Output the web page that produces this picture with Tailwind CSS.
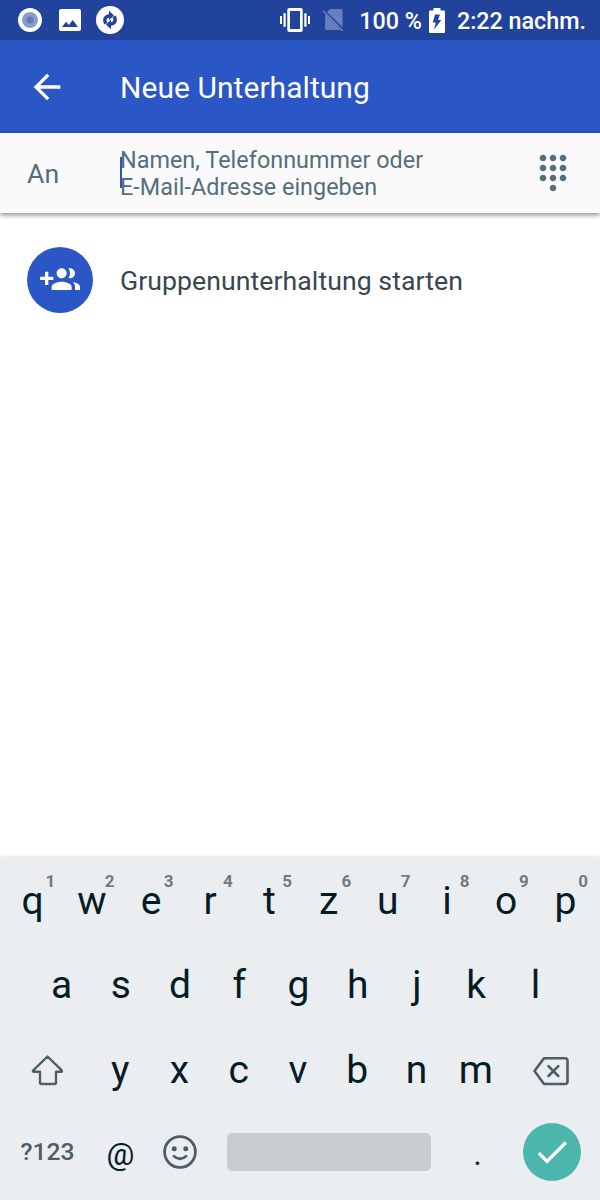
<!DOCTYPE html>
<html lang="de">
<head>
    <meta charset="UTF-8" />
    <meta name="viewport" content="width=device-width, initial-scale=1.0">
    <title>Neue Unterhaltung</title>
    <script src="https://cdn.jsdelivr.net/npm/@tailwindcss/browser@4"></script>
</head>
<body class="bg-white overflow-hidden">
    <div class="w-[600px] h-[1200px] flex flex-col font-[Roboto,sans-serif]">
        <!-- Status bar -->
        <div class="h-10 shrink-0 bg-[#21439c] text-white flex items-center pl-[18px] pr-[14px]">
            <svg class="w-6 h-6" viewBox="0 0 24 24">
                <circle cx="12" cy="12" r="12" fill="#fff" />
                <circle cx="12" cy="12" r="8" fill="#8b9ccc" />
                <circle cx="12" cy="12" r="3.6" fill="#5f78b9" />
            </svg>
            <svg class="w-[22px] h-[22px] ml-[17px]" viewBox="0 0 22 22">
                <path fill="#fff" fill-rule="evenodd" d="M2 0h18a2 2 0 0 1 2 2v18a2 2 0 0 1-2 2H2a2 2 0 0 1-2-2V2a2 2 0 0 1 2-2zM3 18h16l-5.200-7-4 5-2.700-3.300z" />
            </svg>
            <svg class="w-7 h-7 ml-[15px]" viewBox="0 0 28 28">
                <circle cx="14" cy="14" r="14" fill="#fff" />
                <g fill="none" stroke="#21439c" stroke-width="3.400">
                    <path d="M9.800 17.800Q6.600 11 14 9.600" />
                    <path d="M18.200 10.200Q21.400 17 14 18.400" />
                    <path fill="#21439c" stroke="none" d="M13 4.800l5 4.800-5 4.600zM15 23.200l-5-4.800 5-4.600z" />
                </g>
            </svg>
            <svg class="w-[30px] h-[24px] ml-auto" viewBox="0 0 30 24" fill="#fff">
                <path fill-rule="evenodd" d="M9.300 0h11.400a2 2 0 0 1 2 2v20a2 2 0 0 1-2 2H9.300a2 2 0 0 1-2-2V2a2 2 0 0 1 2-2zM10 3v18h10V3z" />
                <path d="M0 8h2v8H0zM3.500 5.300h2.200v13.400H3.500zM28 8h2v8h-2zM24.300 5.300h2.200v13.400h-2.200z" />
            </svg>
            <svg class="w-[22px] h-6 ml-3" viewBox="0 0 22 24">
                <path fill="#6a80bc" d="M8 1h11a1.600 1.600 0 0 1 1.600 1.600v16.600L5 3.900zM3.300 5.900L18.800 22H5a2 2 0 0 1-2-2z" />
                <path stroke="#6a80bc" stroke-width="1.600" d="M1 2.800L21 23" />
            </svg>
            <span class="ml-[15px] text-[23.3px] font-medium whitespace-nowrap leading-10 pt-[2px]">100 %</span>
            <svg class="w-4 h-[25px] ml-[7px]" viewBox="0 0 16 25">
                <path fill="#fff" d="M4.500 0h7v2.500H15a1 1 0 0 1 1 1V24a1 1 0 0 1-1 1H1a1 1 0 0 1-1-1V3.500a1 1 0 0 1 1-1h3.500z" />
                <path fill="#21439c" d="M6 6.500h5L9 12h3.300L5 21.500l1.800-7H3.800z" />
            </svg>
            <span class="ml-[12px] text-[23.3px] font-medium whitespace-nowrap leading-10 pt-[2px]">2:22 nachm.</span>
        </div>

        <!-- App bar -->
        <header class="h-[93px] shrink-0 bg-[#2a56c6] text-white flex items-center pl-[27px]">
            <svg class="w-10 h-10" viewBox="0 0 24 24" fill="#fff">
                <path d="M20 11H7.830l5.590-5.590L12 4l-8 8 8 8 1.410-1.410L7.830 13H20v-2z" />
            </svg>
            <h1 class="ml-[53px] text-[30px] tracking-[0.05px] whitespace-nowrap pt-[2px]">Neue Unterhaltung</h1>
        </header>

        <!-- Recipient -->
        <div class="relative h-20 shrink-0 bg-[#fafafa] text-[#546e7a] flex items-center pl-[27px] pr-[27px] shadow-[0_2px_5px_rgba(0,0,0,0.45)]">
            <span class="w-[93px] text-[26.67px] pt-[2px]">An</span>
            <div class="relative text-[23.33px] leading-[27.3px] tracking-[0.05px] whitespace-nowrap pt-[2px]">
                <span class="absolute left-0 top-[12px] w-[2px] h-[31px] bg-[#2a56c6]"></span>
                <p class="relative">Namen, Telefonnummer oder<br>E-Mail-Adresse eingeben</p>
            </div>
            <svg class="w-10 h-10 ml-auto" viewBox="0 0 24 24" fill="#546e7a">
                <path d="M12 19c-1.100 0-2 .9-2 2s.9 2 2 2 2-.9 2-2-.9-2-2-2zM6 1c-1.100 0-2 .9-2 2s.9 2 2 2 2-.9 2-2-.9-2-2-2zm0 6c-1.100 0-2 .9-2 2s.9 2 2 2 2-.9 2-2-.9-2-2-2zm0 6c-1.100 0-2 .9-2 2s.9 2 2 2 2-.9 2-2-.9-2-2-2zm12-8c1.100 0 2-.9 2-2s-.9-2-2-2-2 .9-2 2 .9 2 2 2zm-6 8c-1.100 0-2 .9-2 2s.9 2 2 2 2-.9 2-2-.9-2-2-2zm6 0c-1.100 0-2 .9-2 2s.9 2 2 2 2-.9 2-2-.9-2-2-2zm0-6c-1.100 0-2 .9-2 2s.9 2 2 2 2-.9 2-2-.9-2-2-2zm-6 0c-1.100 0-2 .9-2 2s.9 2 2 2 2-.9 2-2-.9-2-2-2zm0-6c-1.100 0-2 .9-2 2s.9 2 2 2 2-.9 2-2-.9-2-2-2z" />
            </svg>
        </div>

        <!-- Start group -->
        <main class="flex-1 pt-[34px] pl-[27px]">
            <div class="flex items-center">
                <span class="w-[66px] h-[66px] rounded-full bg-[#2a56c6] flex items-center justify-center">
                    <svg class="w-10 h-10" viewBox="0 0 24 24" fill="#fff">
                        <path d="M8 10H5V7H3v3H0v2h3v3h2v-3h3v-2zm10 1c1.660 0 2.990-1.340 2.990-3S19.660 5 18 5c-.32 0-.63.05-.91.14.57.81.9 1.790.9 2.860s-.34 2.040-.9 2.860c.28.09.59.14.91.14zm-5 0c1.660 0 2.990-1.340 2.990-3S14.660 5 13 5c-1.660 0-3 1.340-3 3s1.340 3 3 3zm6.620 2.160c.83.73 1.380 1.660 1.380 2.840v2h3v-2c0-1.540-2.370-2.490-4.380-2.840zM13 13c-2 0-6 1-6 3v2h12v-2c0-2-4-3-6-3z" />
                    </svg>
                </span>
                <span class="ml-[27px] text-[26.67px] tracking-[0.05px] text-[#37474f] whitespace-nowrap pt-[2px]">Gruppenunterhaltung starten</span>
            </div>
        </main>

        <!-- Keyboard -->
        <div class="h-[343px] shrink-0 bg-[#ebeef1] shadow-[0_-1px_2px_rgba(0,0,0,0.08)] text-[#041c26] text-[39px] leading-[84px] text-center pt-[2px]">
            <div class="h-[84px] pl-[3px] pr-[5px] grid grid-cols-10">
                <div class="relative">q<span class="absolute right-[7px] top-[12px] text-[17px] leading-5 font-bold text-[#6f7b80]">1</span></div>
                <div class="relative">w<span class="absolute right-[7px] top-[12px] text-[17px] leading-5 font-bold text-[#6f7b80]">2</span></div>
                <div class="relative">e<span class="absolute right-[7px] top-[12px] text-[17px] leading-5 font-bold text-[#6f7b80]">3</span></div>
                <div class="relative">r<span class="absolute right-[7px] top-[12px] text-[17px] leading-5 font-bold text-[#6f7b80]">4</span></div>
                <div class="relative">t<span class="absolute right-[7px] top-[12px] text-[17px] leading-5 font-bold text-[#6f7b80]">5</span></div>
                <div class="relative">z<span class="absolute right-[7px] top-[12px] text-[17px] leading-5 font-bold text-[#6f7b80]">6</span></div>
                <div class="relative">u<span class="absolute right-[7px] top-[12px] text-[17px] leading-5 font-bold text-[#6f7b80]">7</span></div>
                <div class="relative">i<span class="absolute right-[7px] top-[12px] text-[17px] leading-5 font-bold text-[#6f7b80]">8</span></div>
                <div class="relative">o<span class="absolute right-[7px] top-[12px] text-[17px] leading-5 font-bold text-[#6f7b80]">9</span></div>
                <div class="relative">p<span class="absolute right-[7px] top-[12px] text-[17px] leading-5 font-bold text-[#6f7b80]">0</span></div>
            </div>
            <div class="h-[84px] pl-[32px] pr-[35px] grid grid-cols-9">
                <div>a</div>
                <div>s</div>
                <div>d</div>
                <div>f</div>
                <div>g</div>
                <div>h</div>
                <div>j</div>
                <div>k</div>
                <div>l</div>
            </div>
            <div class="h-[85px] pl-[31px] pr-[30px] flex items-center justify-between">
                <svg class="w-8 h-8" viewBox="0 0 32 32" fill="none" stroke="#4c5f68" stroke-width="2.400" stroke-linejoin="round">
                    <path d="M16.500 2.500L30.800 16.400a.8.8 0 0 1-.6 1.400H25v11a1.200 1.200 0 0 1-1.200 1.200H10.200A1.200 1.200 0 0 1 9 28.800v-11H2.800a.8.8 0 0 1-.6-1.400z" />
                </svg>
                <div class="w-[415px] grid grid-cols-7">
                    <div>y</div>
                    <div>x</div>
                    <div>c</div>
                    <div>v</div>
                    <div>b</div>
                    <div>n</div>
                    <div>m</div>
                </div>
                <svg class="w-9 h-[30px] mt-[2px] mr-[1px]" viewBox="0 0 36 30" fill="none" stroke="#4c5f68" stroke-width="2.600" stroke-linejoin="round" stroke-linecap="round">
                    <path d="M11 2.300h21a2.500 2.500 0 0 1 2.500 2.500v20.700a2.500 2.500 0 0 1-2.500 2.500H11L1.500 15z" />
                    <path d="M15.500 10.200l9.800 9.800M25.300 10.200l-9.800 9.800" />
                </svg>
            </div>
            <div class="h-[80px] pl-[18px] pr-[19px] flex items-center">
                <span class="w-[59px] text-[24.7px] font-medium text-[#4c5f68]">?123</span>
                <span class="w-[59px] ml-[14px] text-[31px] pt-[5px]">@</span>
                <svg class="w-[34px] h-[34px] ml-[13px]" viewBox="0 0 34 34" fill="none" stroke="#4c5f68" stroke-width="2.800">
                    <circle cx="17" cy="17" r="15.400" />
                    <circle cx="11.200" cy="13.700" r="2.500" fill="#4c5f68" stroke="none" />
                    <circle cx="22.800" cy="13.700" r="2.500" fill="#4c5f68" stroke="none" />
                    <path stroke-linecap="round" d="M11 21.200q6 5.200 12 0" />
                </svg>
                <div class="w-[204px] h-[38px] ml-[30px] rounded-[5px] bg-[#c9cdd0]"></div>
                <span class="w-[59px] ml-[17px] text-[31px] pt-[5px]">.</span>
                <span class="w-[58px] h-[58px] ml-auto rounded-full bg-[#4db6ac] flex items-center justify-center">
                    <svg class="w-10 h-10" viewBox="0 0 24 24" fill="#fff">
                        <path d="M9 16.170L4.830 12l-1.420 1.410L9 19 21 7l-1.410-1.410z" />
                    </svg>
                </span>
            </div>
        </div>
    </div>
</body>
</html>
